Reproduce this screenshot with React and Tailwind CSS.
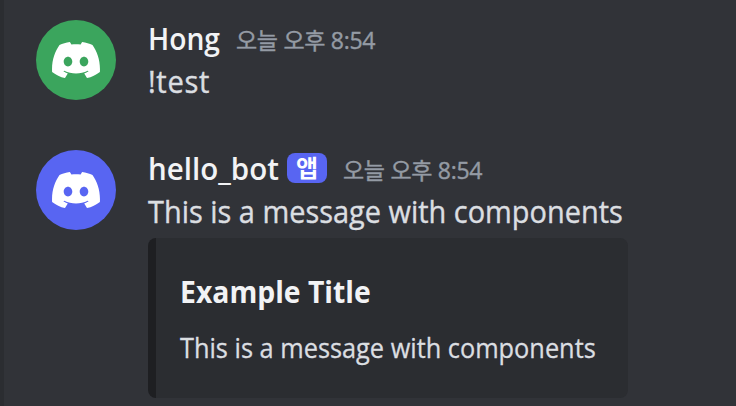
import React from 'react'

export default function App() {
    return (
        <div className="flex h-[406px] w-[736px] overflow-hidden bg-[#313338] font-['Open_Sans','Noto_Sans_CJK_KR',sans-serif]">
            <div className="w-1 shrink-0 bg-[#2b2d31]" />

            <div className="flex flex-col pl-8">
                <Message author="Hong" color="bg-[#3ba55d]" authorStyle="w-[72px] scale-x-[0.91]">
                    <p className="h-11 w-max shrink-0 origin-left scale-x-[0.94] text-[31px] leading-[43px] tracking-[0.7px] [-webkit-text-stroke:0.4px]">!test</p>
                </Message>

                <Message author="hello_bot" color="bg-[#5865f2]" authorStyle="w-[131px] scale-x-[0.952]" bot>
                    <p className="h-11 w-max shrink-0 origin-left scale-x-[0.933] text-[31px] leading-[43px] [-webkit-text-stroke:0.4px]">This is a message with components</p>
                    <Embed />
                </Message>
            </div>
        </div>
    )
}

function Message({ author, color, authorStyle, bot, children }) {
    return (
        <div className="flex h-[130px] shrink-0 gap-8 pt-4">
            <div className={`mt-1 flex h-20 w-20 shrink-0 items-center justify-center rounded-full ${color}`}>
                <Logo />
            </div>

            <div className="flex flex-col text-[#dbdee1]">
                <div className="flex h-11 shrink-0 items-center">
                    <span className={`origin-left text-[31px] leading-[44px] font-semibold whitespace-nowrap text-[#f2f3f5] ${authorStyle}`}>{author}</span>
                    {bot && <BotTag />}
                    <Timestamp />
                </div>
                {children}
            </div>
        </div>
    )
}

function Logo() {
    return (
        <svg width="48" height="36" viewBox="0 0 48 36" fill="#fff">
            <path
                fillRule="evenodd"
                d="M17.9 0C14 .5 10.500 1.700 7.500 3.100C2.800 10 -.5 18.500 .1 29.900C4 33 8.300 35 13 36L15.800 31.500C14.200 31 12.800 30.300 11.400 29.300L12.300 28.700C19.500 32.300 28.500 32.300 35.700 28.700L36.600 29.300C35.200 30.300 33.800 31 32.200 31.500L35 36C39.700 35 44 33 47.900 29.900C48.500 18.500 45.200 10 40.500 3.100C37.500 1.700 34 .5 30.100 0L28.600 2.500C25.500 2 22.500 2 19.400 2.500ZM16 14.800C18.400 14.800 20.300 17 20.300 19.600C20.300 22.200 18.400 24.400 16 24.400C13.600 24.400 11.700 22.200 11.700 19.600C11.700 17 13.600 14.800 16 14.800ZM32 14.800C34.400 14.800 36.300 17 36.300 19.600C36.300 22.200 34.400 24.400 32 24.400C29.600 24.400 27.700 22.200 27.700 19.600C27.700 17 29.600 14.800 32 14.800Z"
            />
        </svg>
    )
}

function BotTag() {
    return (
        <span className="ml-2 flex h-[30px] w-10 shrink-0 items-center justify-center rounded-lg bg-[#5865f2] pb-px text-[24px] leading-[30px] font-bold text-white">
            앱
        </span>
    )
}

function Timestamp() {
    return (
        <span className="mt-1 ml-4 text-[23px] leading-[44px] tracking-[-0.3px] whitespace-nowrap text-[#949ba4] [-webkit-text-stroke:0.4px]">
            오늘 오후 8:54
        </span>
    )
}

function Embed() {
    return (
        <div className="mt-1 flex h-40 w-[480px] shrink-0 flex-col rounded-lg border-l-8 border-[#1e1f22] bg-[#2b2d31] pt-8 pl-6">
            <h3 className="w-max origin-left scale-x-[0.945] text-[30px] leading-[44px] font-bold text-[#f2f3f5]">Example Title</h3>
            <p className="mt-4 w-max origin-left scale-x-[0.938] text-[27px] leading-9 [-webkit-text-stroke:0.3px]">This is a message with components</p>
        </div>
    )
}
